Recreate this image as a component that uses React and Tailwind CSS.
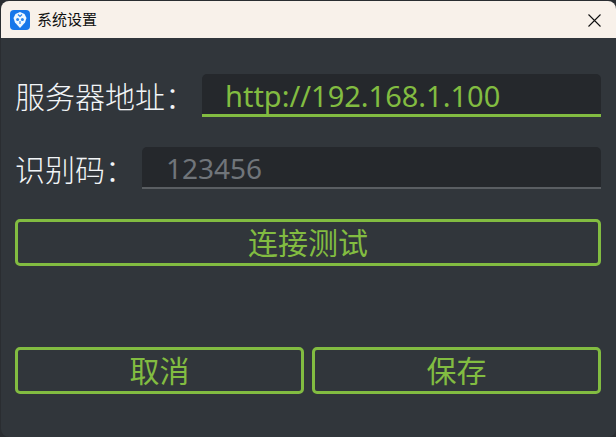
export default function App() {
  const cjk = "font-['Noto_Sans','Noto_Sans_CJK_SC',sans-serif]";
  const btn = `h-[47px] border-[3px] border-[#82bc41] rounded-[5px] bg-transparent text-[#82bc41] text-[30px] leading-none flex items-center justify-center ${cjk}`;
  return (
    <div className={`w-[616px] h-[437px] bg-[#2a2d31] overflow-hidden ${cjk}`}>
      <div className="w-[615px] h-[436px] mt-px ml-px rounded-[8px] overflow-hidden bg-[#31363b] flex flex-col">
        <div className="h-[37px] shrink-0 bg-[#f8f1ea] flex items-center pl-[9px] pr-[15px]">
          <svg width="20" height="20" viewBox="0 0 20 20" className="shrink-0">
            <rect width="20" height="20" rx="4" fill="#1877ea" />
            <path d="M10 2 L14.5 4 L16.5 8 L15 12.5 L10 18 L5 12.5 L3.5 8 L5.5 4 Z" fill="#f0f7ff" />
            <circle cx="7.6" cy="9.5" r="1.5" fill="#2b86ee" />
            <circle cx="12.4" cy="9.5" r="1.5" fill="#2b86ee" />
            <path d="M8 4.5 L10 6.5 L12 4.5 M10 11 L10 14" stroke="#2b86ee" strokeWidth="1.2" fill="none" />
          </svg>
          <span className="ml-[7px] text-[15px] text-[#111] leading-none">系统设置</span>
          <svg width="13" height="13" viewBox="0 0 13 13" className="ml-auto shrink-0 mt-px">
            <path d="M0.5 0.5 L12.5 12.5 M12.5 0.5 L0.5 12.5" stroke="#111" strokeWidth="1.1" />
          </svg>
        </div>
        <div className="flex-1 flex flex-col pl-[14px] pr-[15px] pt-[36px]">
          <div className="flex items-center h-[43px]">
            <span className="w-[187px] pt-[3px] text-[30px] leading-none text-[#f2f5f7] font-light">服务器地址：</span>
            <div className="flex-1 h-[43px] bg-[#25282c] rounded-t-[5px] border-b-[3px] border-[#82bc41] flex items-center pl-[23px] pt-[3px] text-[29px] leading-none text-[#82bc41]">
              http://192.168.1.100
            </div>
          </div>
          <div className="flex items-center h-[42px] mt-[30px]">
            <span className="w-[127px] pt-[3px] text-[30px] leading-none text-[#f2f5f7] font-light">识别码：</span>
            <div className="flex-1 h-[42px] bg-[#25282c] rounded-t-[5px] border-b-[2px] border-[#5a5e62] flex items-center pl-[24px] pt-[1px] text-[28px] leading-none text-[#70757a]">
              123456
            </div>
          </div>
          <button className={`${btn} mt-[30px]`}>连接测试</button>
          <div className="flex gap-[8px] mt-[81px]">
            <button className={`${btn} flex-1`}>取消</button>
            <button className={`${btn} flex-1`}>保存</button>
          </div>
        </div>
      </div>
    </div>
  );
}
